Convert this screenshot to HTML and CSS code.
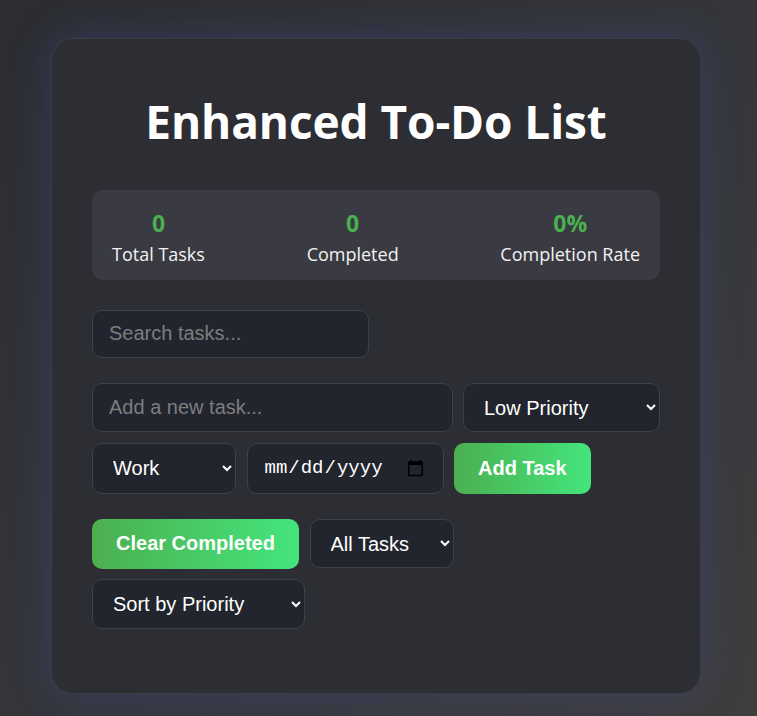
FILE: index.html
```html
<!DOCTYPE html>
<html lang="en">
<head>
<meta charset="utf-8">
<title>Enhanced To-Do List</title>
<link rel="stylesheet" href="styles.css">
</head>
<body>
  <main class="card">
    <h1 class="title">Enhanced To-Do List</h1>

    <section class="stats">
      <div class="stat">
        <div class="stat-value">0</div>
        <div class="stat-label">Total Tasks</div>
      </div>
      <div class="stat">
        <div class="stat-value">0</div>
        <div class="stat-label">Completed</div>
      </div>
      <div class="stat">
        <div class="stat-value">0%</div>
        <div class="stat-label">Completion Rate</div>
      </div>
    </section>

    <input class="field search" type="text" placeholder="Search tasks...">

    <section class="add-section">
      <div class="row">
        <input class="field task-input" type="text" placeholder="Add a new task...">
        <select class="field priority-select">
          <option>Low Priority</option>
          <option>Medium Priority</option>
          <option>High Priority</option>
        </select>
      </div>
      <div class="row">
        <select class="field category-select">
          <option>Work</option>
          <option>Personal</option>
          <option>Shopping</option>
        </select>
        <input class="field date-input" type="date">
        <button class="btn" type="button">Add Task</button>
      </div>
    </section>

    <section class="controls">
      <button class="btn" type="button">Clear Completed</button>
      <select class="field filter-select">
        <option>All Tasks</option>
        <option>Active</option>
        <option>Completed</option>
      </select>
      <select class="field sort-select">
        <option>Sort by Priority</option>
        <option>Sort by Date</option>
        <option>Sort by Name</option>
      </select>
    </section>

    <ul class="task-list"></ul>
  </main>
</body>
</html>
```

FILE: styles.css
```css
* {
  box-sizing: border-box;
}

html, body {
  height: 100%;
}

body {
  margin: 0;
  background: linear-gradient(135deg, #2b2d31 0%, #34363a 50%, #3e3e3e 100%);
  font-family: "Open Sans", "Noto Sans", sans-serif;
  color: #ffffff;
  overflow: hidden;
}

.card {
  width: 650px;
  margin: 38px 0 0 51px;
  padding: 40px;
  background: #2c2e33;
  border: 1px solid rgba(255, 255, 255, 0.07);
  border-radius: 22px;
  box-shadow: 0 0 40px rgba(72, 74, 160, 0.38);
}

.title {
  margin: 11px 0 37px;
  text-align: center;
  font-size: 46px;
  font-weight: 700;
  letter-spacing: -0.1px;
  line-height: 1.362;
  color: #ffffff;
}

.stats {
  display: flex;
  justify-content: space-between;
  padding: 17px 20px 13px;
  background: #393a42;
  border-radius: 11px;
  margin-bottom: 30px;
}

.stat {
  text-align: center;
}

.stat-value {
  font-size: 23px;
  font-weight: 700;
  color: #4caf50;
  line-height: 32px;
  margin-bottom: 3px;
}

.stat-label {
  font-size: 18px;
  line-height: 25px;
  color: #f2f2f2;
}

.field {
  font-family: "Liberation Sans", Arial, sans-serif;
  font-size: 20px;
  color: #ffffff;
  background: #22252d;
  border: 1px solid #3d404d;
  border-radius: 10px;
  padding: 12px 16px;
  outline: none;
}

.field::placeholder {
  color: #7d7d80;
}

.search {
  display: block;
  width: 277px;
  height: 48px;
  margin-bottom: 25px;
}

.add-section {
  display: flex;
  flex-direction: column;
  gap: 11px;
  margin-bottom: 25px;
}

.row {
  display: flex;
  gap: 10.5px;
  align-items: flex-start;
}

.task-input {
  flex: 1;
  min-width: 0;
  height: 49px;
}

.priority-select {
  width: 197px;
  height: 49px;
}

.category-select {
  width: 144px;
  height: 51px;
}

.date-input {
  width: 197px;
  height: 51px;
  font-family: "Liberation Mono", monospace;
  font-size: 19px;
  padding: 12px 16px;
}

.btn {
  font-family: "Liberation Sans", Arial, sans-serif;
  font-size: 20px;
  font-weight: 700;
  color: #ffffff;
  border: none;
  border-radius: 10px;
  padding: 0 24px;
  height: 51px;
  background: linear-gradient(90deg, #4caf50 0%, #44e57c 100%);
  cursor: pointer;
}

.controls {
  display: flex;
  flex-wrap: wrap;
  gap: 10px 10.5px;
}

.controls .btn {
  width: 207px;
  height: 50px;
}

.filter-select {
  width: 144px;
  height: 49px;
}

.sort-select {
  width: 213px;
  height: 50px;
}

.task-list {
  list-style: none;
  margin: 24px 0 0;
  padding: 0;
}
```
